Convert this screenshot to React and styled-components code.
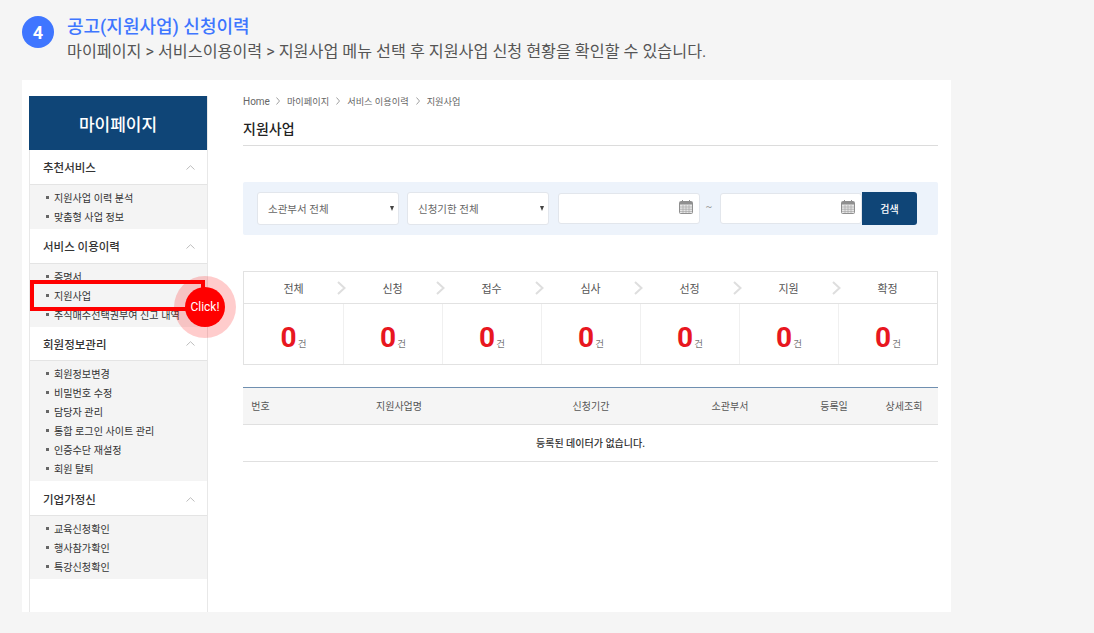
import React from 'react';
import styled, { createGlobalStyle } from 'styled-components';

const GlobalStyle = createGlobalStyle`
  * { box-sizing: border-box; }
  html, body { margin: 0; padding: 0; background: #f5f5f5; }
  body { font-family: Roboto, "Noto Sans CJK KR", sans-serif; color: #333; }
`;

const Page = styled.div`
  width: 1094px;
  height: 633px;
  overflow: hidden;
  padding: 13px 0 0 22px;
`;

const Intro = styled.div`
  display: flex;
  gap: 13px;
  height: 67px;
`;

const StepBadge = styled.div`
  width: 32px;
  height: 32px;
  margin-top: 3px;
  border-radius: 50%;
  background: #3f76ff;
  color: #fff;
  font-size: 18px;
  font-weight: 700;
  display: flex;
  align-items: center;
  justify-content: center;
`;

const IntroTitle = styled.div`
  margin-top: 1px;
  font-size: 18px;
  font-weight: 500;
  line-height: 25px;
  color: #3f76ff;
`;

const IntroText = styled.div`
  font-size: 16.2px;
  line-height: 26px;
  color: #555;
`;

const Card = styled.div`
  width: 929px;
  height: 532px;
  background: #fff;
  padding: 16px 0 0 7px;
  display: flex;
`;

const Sidebar = styled.aside`
  position: relative;
  width: 179px;
  border-left: 1px solid #e8e8e8;
  border-right: 1px solid #e8e8e8;
`;

const SideTitle = styled.div`
  height: 54px;
  margin: 0 0 0 -1px;
  background: #0f4577;
  color: #fff;
  font-size: 17px;
  font-weight: 500;
  display: flex;
  align-items: center;
  justify-content: center;
`;

const GroupHead = styled.div`
  height: ${p => p.$h || 35}px;
  padding: ${p => p.$drop || 0}px 12px 0 13px;
  display: flex;
  align-items: center;
  justify-content: space-between;
  font-size: 11.5px;
  font-weight: 500;
  color: #333;
  border-bottom: 1px solid #e4e4e4;
`;

const GroupList = styled.ul`
  margin: 0;
  padding: 3px 0;
  list-style: none;
  background: #f4f4f4;
`;

const GroupItem = styled.li`
  height: 19px;
  padding-left: 16px;
  display: flex;
  align-items: center;
  gap: 5px;
  font-size: 10.1px;
  color: #333;
  white-space: nowrap;
  &::before {
    content: "";
    width: 3px;
    height: 3px;
    background: #666;
  }
`;

const ClickFrame = styled.div`
  position: absolute;
  left: 0;
  top: 184px;
  width: 175px;
  height: 31px;
  border: 4px solid #f00;
`;

const ClickHalo = styled.div`
  position: absolute;
  left: 144px;
  top: 180px;
  width: 62px;
  height: 62px;
  border-radius: 50%;
  background: rgba(255, 0, 0, 0.2);
  display: flex;
  align-items: center;
  justify-content: center;
`;

const ClickDot = styled.div`
  width: 40px;
  height: 40px;
  border-radius: 50%;
  background: #f00;
  color: #fff;
  font-size: 12px;
  display: flex;
  align-items: center;
  justify-content: center;
`;

const Main = styled.main`
  width: 695px;
  margin-left: 35px;
`;

const Crumbs = styled.div`
  height: 12px;
  margin-top: -1px;
  display: flex;
  align-items: center;
  gap: 7px;
  font-size: 9.2px;
  color: #666;
`;

const CrumbHome = styled.span`
  font-size: 10px;
  margin-right: -1px;
`;

const PageTitle = styled.h2`
  margin: 0;
  height: 39px;
  padding-top: 13px;
  font-size: 14px;
  line-height: 18px;
  font-weight: 500;
  color: #222;
  border-bottom: 1px solid #dcdcdc;
`;

const SearchBar = styled.div`
  margin-top: 36px;
  height: 53px;
  background: #edf3fb;
  border-radius: 2px;
  padding: 10px 21px 0 14px;
  display: flex;
  align-items: flex-start;
`;

const Select = styled.div`
  width: 142px;
  height: 33px;
  margin-right: ${p => p.$gap}px;
  padding: 0 4px 0 10px;
  background: #fff;
  border: 1px solid #e2e6ec;
  border-radius: 3px;
  display: flex;
  align-items: center;
  justify-content: space-between;
  font-size: 10.5px;
  color: #666;
`;

const SelectArrow = styled.span`
  width: 0;
  height: 0;
  border-left: 2.5px solid transparent;
  border-right: 2.5px solid transparent;
  border-top: 5px solid #444;
`;

const DateBox = styled.div`
  width: 142px;
  height: 31px;
  margin-top: 1px;
  padding: 0 6px 3px 0;
  background: #fff;
  border: 1px solid #e2e6ec;
  border-radius: 3px;
  display: flex;
  align-items: center;
  justify-content: flex-end;
`;

const Tilde = styled.span`
  width: 20px;
  margin-top: 9px;
  padding-right: 2px;
  text-align: center;
  font-size: 10px;
  color: #999;
`;

const SearchButton = styled.button`
  width: 55px;
  height: 33px;
  padding: 0;
  border: 0;
  border-radius: 0 3px 3px 0;
  background: #0f4577;
  color: #fff;
  font-family: inherit;
  font-size: 10px;
  font-weight: 500;
`;

const Stats = styled.div`
  margin-top: 36px;
  height: 94px;
  border: 1px solid #e2e2e2;
  display: grid;
  grid-template-columns: repeat(7, 1fr);
  grid-template-rows: 32px 1fr;
`;

const StatHead = styled.div`
  position: relative;
  border-bottom: 1px solid #e2e2e2;
  display: flex;
  align-items: center;
  justify-content: center;
  font-size: 11px;
  color: #555;
`;

const StatArrow = styled.svg`
  position: absolute;
  right: -3px;
  top: 9px;
  width: 9px;
  height: 14px;
  z-index: 1;
`;

const StatValue = styled.div`
  display: flex;
  align-items: baseline;
  justify-content: center;
  gap: 1px;
  padding-top: 18px;
  border-left: ${p => (p.$first ? 'none' : '1px solid #f0f0f0')};
`;

const StatNumber = styled.strong`
  font-size: 28px;
  line-height: 32px;
  font-weight: 700;
  color: #e8171f;
`;

const StatUnit = styled.span`
  font-size: 9.5px;
  color: #777;
`;

const TableHead = styled.div`
  margin-top: 22px;
  height: 38px;
  padding-bottom: 1px;
  background: #f5f5f5;
  border-top: 1px solid #6f8fb0;
  border-bottom: 1px solid #e0e0e0;
  display: grid;
  grid-template-columns: 35px 242px 142px 136px 72px 68px;
  align-items: center;
  font-size: 10px;
  color: #555;
`;

const HeadCell = styled.div`
  text-align: center;
  white-space: nowrap;
`;

const EmptyRow = styled.div`
  height: 37px;
  padding-bottom: 1px;
  border-bottom: 1px solid #e0e0e0;
  display: flex;
  align-items: center;
  justify-content: center;
  font-size: 10px;
  font-weight: 500;
  color: #333;
`;

const UpChevron = () => (
  <svg width="9" height="5" viewBox="0 0 9 5" fill="none" stroke="#bdbdbd" strokeWidth="1">
    <polyline points="0.5,4.5 4.5,0.7 8.5,4.5" />
  </svg>
);

const CrumbChevron = () => (
  <svg width="4" height="8" viewBox="0 0 4 8" fill="none" stroke="#888" strokeWidth="0.8">
    <polyline points="0.5,0.5 3.5,4 0.5,7.5" />
  </svg>
);

const CalendarIcon = () => (
  <svg width="14" height="14" viewBox="0 0 14 14">
    <rect x="0.5" y="1.5" width="13" height="12" rx="1" fill="#e6e6e6" stroke="#8f8f8f" />
    <rect x="1" y="2" width="12" height="2.5" fill="#8f8f8f" />
    <path d="M3.5 0v2.5M10.5 0v2.5" stroke="#8f8f8f" />
    <path d="M1 7h12M1 9.3h12M1 11.5h12M4 5v8M7 5v8M10 5v8" stroke="#a8a8a8" strokeWidth="0.7" />
  </svg>
);

const menu = [
  { title: '추천서비스', items: ['지원사업 이력 분석', '맞춤형 사업 정보'] },
  { title: '서비스 이용이력', items: ['증명서', '지원사업', '주식매수선택권부여 신고 내역'] },
  { title: '회원정보관리', h: 34, items: ['회원정보변경', '비밀번호 수정', '담당자 관리', '통합 로그인 사이트 관리', '인증수단 재설정', '회원 탈퇴'] },
  { title: '기업가정신', drop: 2, items: ['교육신청확인', '행사참가확인', '특강신청확인'] },
];

const steps = ['전체', '신청', '접수', '심사', '선정', '지원', '확정'];

export default function App() {
  return (
    <>
      <GlobalStyle />
      <Page>
        <Intro>
          <StepBadge>4</StepBadge>
          <div>
            <IntroTitle>공고(지원사업) 신청이력</IntroTitle>
            <IntroText>마이페이지 &gt; 서비스이용이력 &gt; 지원사업 메뉴 선택 후 지원사업 신청 현황을 확인할 수 있습니다.</IntroText>
          </div>
        </Intro>
        <Card>
          <Sidebar>
            <SideTitle>마이페이지</SideTitle>
            {menu.map(group => (
              <div key={group.title}>
                <GroupHead $h={group.h} $drop={group.drop}>
                  {group.title}
                  <UpChevron />
                </GroupHead>
                <GroupList>
                  {group.items.map(item => (
                    <GroupItem key={item}>{item}</GroupItem>
                  ))}
                </GroupList>
              </div>
            ))}
            <ClickFrame />
            <ClickHalo>
              <ClickDot>Click!</ClickDot>
            </ClickHalo>
          </Sidebar>
          <Main>
            <Crumbs>
              <CrumbHome>Home</CrumbHome>
              <CrumbChevron />
              <span>마이페이지</span>
              <CrumbChevron />
              <span>서비스 이용이력</span>
              <CrumbChevron />
              <span>지원사업</span>
            </Crumbs>
            <PageTitle>지원사업</PageTitle>
            <SearchBar>
              <Select $gap={8}>소관부서 전체<SelectArrow /></Select>
              <Select $gap={9}>신청기한 전체<SelectArrow /></Select>
              <DateBox><CalendarIcon /></DateBox>
              <Tilde>~</Tilde>
              <DateBox><CalendarIcon /></DateBox>
              <SearchButton>검색</SearchButton>
            </SearchBar>
            <Stats>
              {steps.map((step, i) => (
                <StatHead key={step}>
                  {step}
                  {i < steps.length - 1 && (
                    <StatArrow viewBox="0 0 9 14" fill="none" stroke="#dedede" strokeWidth="2">
                      <polyline points="1,1 7.5,7 1,13" />
                    </StatArrow>
                  )}
                </StatHead>
              ))}
              {steps.map((step, i) => (
                <StatValue key={step} $first={i === 0}>
                  <StatNumber>0</StatNumber>
                  <StatUnit>건</StatUnit>
                </StatValue>
              ))}
            </Stats>
            <TableHead>
              <HeadCell>번호</HeadCell>
              <HeadCell>지원사업명</HeadCell>
              <HeadCell>신청기간</HeadCell>
              <HeadCell>소관부서</HeadCell>
              <HeadCell>등록일</HeadCell>
              <HeadCell>상세조회</HeadCell>
            </TableHead>
            <EmptyRow>등록된 데이터가 없습니다.</EmptyRow>
          </Main>
        </Card>
      </Page>
    </>
  );
}
